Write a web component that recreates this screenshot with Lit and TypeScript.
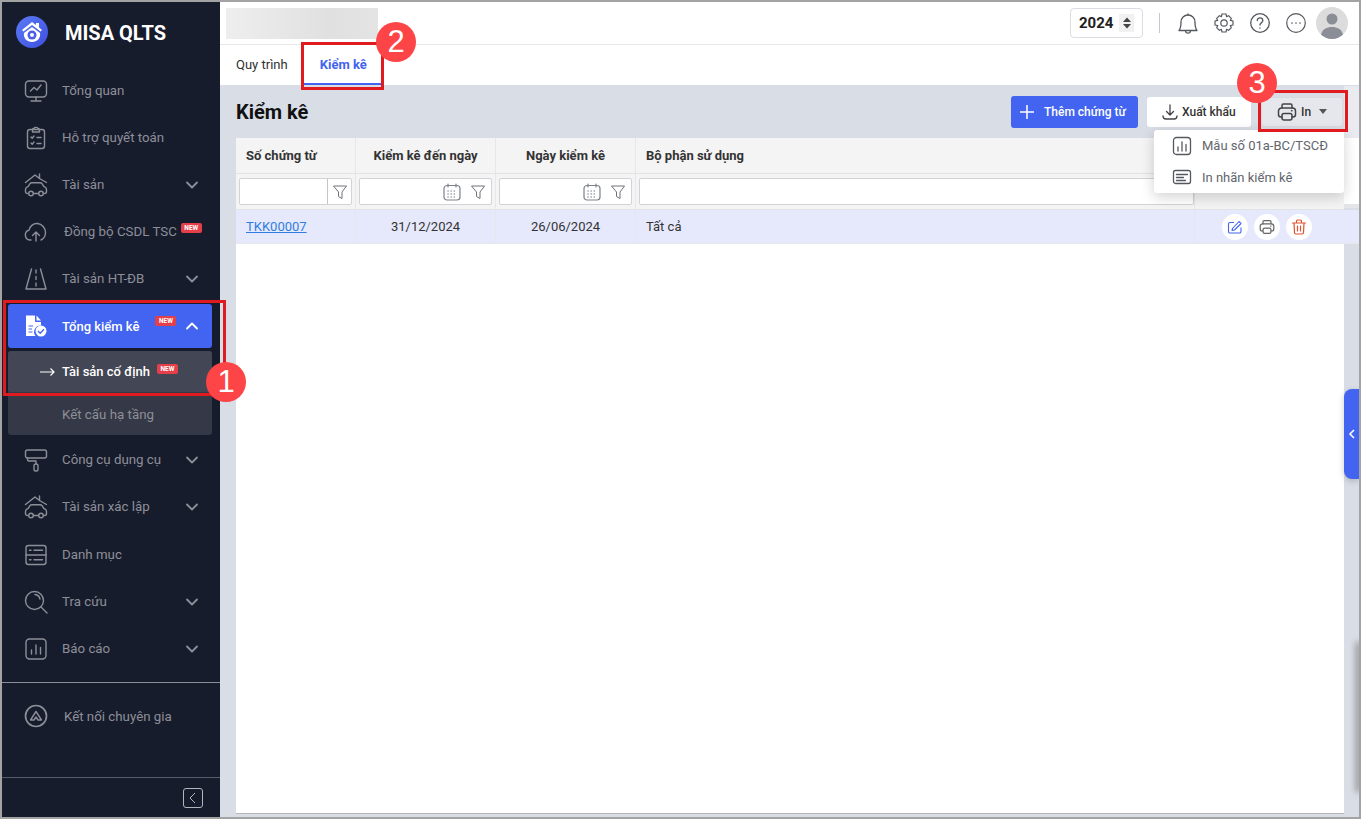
import { LitElement, html, css, svg } from "lit";
import { customElement } from "lit/decorators.js";

const ic = (size: number, body: unknown, vb = 24) => html`<svg class="ic" width=${size} height=${size} viewBox="0 0 ${vb} ${vb}" fill="none" stroke="currentColor" stroke-width="1.400" stroke-linecap="round" stroke-linejoin="round">${body}</svg>`;

const carHouse = svg`<path d="M1.500 9.500 11 2l4.500 3.500M15.500 1v4.500M22.500 9.500l-7-4"/><path d="M3.500 20.500C2 20.500 1.500 19.500 1.500 18.500v-2c0-1.500 1-2.300 2.500-2.800l2-3c.5-.7 1-1 1.800-1h8.400c.8 0 1.300.3 1.800 1l2 3c1.500.5 2.500 1.300 2.500 2.800v2c0 1-.5 2-2 2M9.500 20.500h5"/><circle cx="7" cy="20.500" r="2.300"/><circle cx="17" cy="20.500" r="2.300"/>`;
const icons: Record<string, unknown> = {
  monitor: svg`<rect x="1.500" y="2" width="21" height="16" rx="3.500"/><path d="M12 18v4M7 22h10M6.500 12l3.500-3.500 3 2.500 4-5"/>`,
  clip: svg`<rect x="3.500" y="3.500" width="17" height="19" rx="2.500"/><path d="M8.500 3.500c0-1 1-1 1.500-1 0-1.500 4-1.500 4 0 .5 0 1.500 0 1.500 1V6h-7ZM7 11l1.200 1.200L10 10M13 11.500h4M7 17l1.200 1.200L10 16M13 17.500h4"/>`,
  car: carHouse,
  cloud: svg`<path d="M7 20H6a5 5 0 0 1-1-9.800C6 6 9.500 3 13.500 3.500c4.500.5 8 4.500 8 9 0 3.500-1.500 6-4.500 7.500"/><path d="M12 21v-9M8.500 15.500 12 12l3.500 3.500"/>`,
  road: svg`<path d="M7.500 2 2 22h20L16.500 2M12 3v3M12 9.500v3M12 16v3"/>`,
  roller: svg`<rect x="1.500" y="2" width="21" height="8" rx="2"/><path d="M3.500 10v1.500c0 1 .5 1.500 1.500 1.500h7v3"/><rect x="10" y="16" width="4" height="7" rx="1.800"/>`,
  list: svg`<rect x="2" y="2.500" width="20" height="19" rx="2.500"/><path d="M2 12h20M5.500 7.200h1.500M10 7.200h8.500M5.500 16.800h1.500M10 16.800h8.500"/>`,
  search: svg`<circle cx="10.500" cy="10.500" r="9"/><path d="M17 17l6 6M11 4.500c2.500.3 4.500 2 5 4.500"/>`,
  chart: svg`<rect x="2" y="2" width="20" height="20" rx="3.500"/><path d="M7.500 13v4M12 8v9M16.500 10.500V17"/>`,
  chat: svg`<circle cx="12" cy="12" r="10.500" stroke-width="1.700"/><path d="M6.500 16 12 7.500l5.500 8.500h-3.500L12 13l-2 3Z"/>`,
};

interface Nav { icon: string; label: string; chevron?: boolean; isNew?: boolean; shift?: boolean; low?: boolean }
const top: Nav[] = [
  { icon: "monitor", label: "Tổng quan" },
  { icon: "clip", label: "Hỗ trợ quyết toán" },
  { icon: "car", label: "Tài sản", chevron: true },
  { icon: "cloud", label: "Đồng bộ CSDL TSC", isNew: true, shift: true },
  { icon: "road", label: "Tài sản HT-ĐB", chevron: true },
];
const rest: Nav[] = [
  { icon: "roller", label: "Công cụ dụng cụ", chevron: true },
  { icon: "car", label: "Tài sản xác lập", chevron: true },
  { icon: "list", label: "Danh mục", low: true },
  { icon: "search", label: "Tra cứu", chevron: true },
  { icon: "chart", label: "Báo cáo", chevron: true },
];

const chevron = (up = false) => html`<svg class="chev" width="14" height="14" viewBox="0 0 14 14" fill="none" stroke="currentColor" stroke-width="1.800" stroke-linecap="round" stroke-linejoin="round"><path d=${up ? "M2 9.500 7 4.500l5 5" : "M2 4.500l5 5 5-5"}/></svg>`;
const filter = html`<svg width="16" height="16" viewBox="0 0 16 16" fill="none" stroke="#6f7278" stroke-width="1" stroke-linejoin="round"><path d="M1.500 2h13L10 8v6.500l-3.500-2V8Z"/></svg>`;
const cal = html`<svg width="18" height="18" viewBox="0 0 18 18" fill="none" stroke="#7d818b" stroke-width="1.200" stroke-linecap="round"><rect x="1" y="2.500" width="16" height="14.500" rx="3"/><path d="M5 1v3M13 1v3"/><path stroke-dasharray="0.100 3" stroke-width="1.300" d="M5 8h9M5 11h9M5 14h9"/></svg>`;
const printer = (s: number, col: string) => html`<svg width=${s} height=${s} viewBox="0 0 20 20" fill="none" stroke=${col} stroke-width="1.500" stroke-linecap="round" stroke-linejoin="round"><path d="M5 6V3.500C5 2.500 5.800 2 6.500 2h7c.8 0 1.500.5 1.500 1.500V6"/><path d="M5 15H4a2.500 2.500 0 0 1-2.500-2.500V9A3 3 0 0 1 4.500 6h11a3 3 0 0 1 3 3v3.500A2.500 2.500 0 0 1 16 15h-1"/><rect x="5" y="11.500" width="10" height="6.500" rx="2"/><path d="M14.500 8.800h.5"/></svg>`;

@customElement("app-root")
export class AppRoot extends LitElement {
  static styles = css`
    :host { display: block; width: 1361px; height: 819px; box-sizing: border-box; border: 2px solid #a3a3a3; position: relative; overflow: hidden; font-family: Roboto, "Noto Sans", sans-serif; font-size: 13px; color: #212121; }
    .app { display: flex; height: 100%; }
    .side { width: 218px; flex: none; background: #171c2d; color: #8d8f98; display: flex; flex-direction: column; font-size: 13.300px; }
    .brand { height: 65px; flex: none; display: flex; align-items: flex-start; padding: 14px 0 0 14px; box-sizing: border-box; gap: 17px; color: #fff; font-weight: 700; font-size: 20px; }
    .brand span { line-height: 35px; }
    .item { height: 47px; flex: none; display: flex; align-items: center; padding-left: 22px; position: relative; }
    .item.low { margin-top: 1px; }
    .item .ic { flex: none; margin-right: 14px; }
    .item.shift .lab { margin-left: 2px; }
    .chev { position: absolute; right: 21px; top: 50%; margin-top: -7px; }
    .new { display: inline-flex; align-items: center; justify-content: center; width: 21px; height: 10px; background: #e53f49; color: #fff; font-size: 6.500px; font-weight: 700; border-radius: 2px; margin-left: 4px; transform: translateY(-4px); }
    .active { margin: 2px 8px 0 6px; height: 44px; box-sizing: border-box; background: #4264f0; color: #fff; border-radius: 3px; padding-left: 16px; font-weight: 500; display: flex; align-items: center; position: relative; flex: none; font-size: 13px; }
    .active .new { margin-left: 16px; transform: translateY(-5px); }
    .active .chev { right: 13px; }
    .active .lab { margin-left: 14px; }
    .sub { margin: 3px 8px 1px 6px; background: #353846; border-radius: 3px; height: 84px; flex: none; font-size: 13px; }
    .sub div { height: 41px; display: flex; align-items: center; padding-left: 32px; gap: 7px; }
    .sub .on { background: #434654; color: #fff; font-weight: 500; border-radius: 3px; }
    .sub .on .new { margin-left: 0; transform: translateY(-3px); }
    .sub .off { height: 45px; padding-left: 54px; font-size: 13.300px; }
    .spacer1 { height: 10px; flex: none; }
    .rule { height: 1px; background: #8b8e97; flex: none; }
    .rule.dim { background: #585c68; }
    .expert { height: 94px; flex: none; display: flex; align-items: center; padding: 0 0 28px 22px; box-sizing: border-box; }
    .expert .ic { margin-right: 16px; }
    .foot { flex: 1; display: flex; justify-content: flex-end; align-items: center; padding-right: 17px; }
    .collapse { width: 20px; height: 20px; box-sizing: border-box; border: 1px solid #b4b6bc; border-radius: 3px; display: flex; align-items: center; justify-content: center; }

    .main { flex: 1; min-width: 0; display: flex; flex-direction: column; background: #d9dde6; }
    .topbar { height: 42px; flex: none; background: #fff; display: flex; align-items: center; border-bottom: 1px solid #e6e7ea; padding: 0 11px 0 6px; box-sizing: content-box; }
    .blur { width: 152px; height: 31px; background: linear-gradient(90deg, #eeeeee, #e0e0e0 70%, #e4e4e4); }
    .year { margin-left: auto; width: 73px; height: 30px; box-sizing: border-box; border: 1px solid #d9dce3; border-radius: 4px; display: flex; align-items: center; padding-left: 8px; font-weight: 700; font-size: 15px; gap: 6px; }
    .spin { width: 15px; height: 18px; background: #f1f1f1; display: flex; align-items: center; justify-content: center; }
    .sep { width: 1px; height: 20px; background: #c4c8d0; margin: 0 16px; }
    .tools { display: flex; align-items: center; gap: 12px; color: #55585e; }
    .tools svg { display: block; }
    .avatar { width: 32px; height: 32px; border-radius: 50%; background: #dcdcdc; overflow: hidden; margin-left: -4px; }
    .tabs { height: 40px; flex: none; background: #fff; display: flex; padding-left: 16px; align-items: stretch; }
    .tab { display: flex; align-items: center; height: 38px; color: #303030; }
    .tab.sel { margin-left: 16px; padding: 0 16px; color: #4264f0; font-weight: 700; font-size: 13px; border-bottom: 2px solid #4264f0; }
    .content { flex: 1; display: flex; flex-direction: column; padding: 0 15px 3px 16px; min-height: 0; }
    .head { height: 53px; flex: none; display: flex; align-items: center; }
    h1 { margin: 0; font-size: 20px; font-weight: 700; color: #111; margin-right: auto; }
    .btn { height: 30px; box-sizing: border-box; display: flex; align-items: center; background: #fff; border-radius: 3px; font-weight: 500; font-size: 12px; color: #333; }
    .btn.add { width: 127px; height: 32px; background: #4264f0; color: #fff; padding-left: 8px; gap: 9px; margin-right: 9px; }
    .btn.exp { width: 104px; padding-left: 15px; gap: 4px; margin-right: 10px; }
    .btn.prt { width: 82px; margin-right: 1px; background: #e6e7ec; border: 1px solid #d8dae0; padding-left: 15px; gap: 4px; }
    .caret { width: 0; height: 0; border: 4px solid transparent; border-top: 5px solid #555; margin: 4px 0 0 4px; }
    .panel { flex: 1; background: #fff; display: flex; flex-direction: column; min-height: 0; border-bottom: 1px solid #b5b5b5; }
    .row { display: grid; grid-template-columns: 120px 140px 140px 559px 149px; flex: none; }
    .row > div { box-sizing: border-box; border-right: 1px solid #e6e7ea; display: flex; align-items: center; }
    .row > div:last-child { border-right: 0; }
    .hd { height: 35px; background: #f4f4f4; font-weight: 700; color: #333; font-size: 13px; border-bottom: 1px solid #e2e3e6; }
    .hd > div { padding-left: 10px; }
    .hd .c { justify-content: center; padding: 0; }
    .flt { height: 36px; background: #f4f4f4; border-bottom: 1px solid #e2e3e6; box-sizing: border-box; }
    .flt > div { padding: 0 3px; }
    .flt > div.wide { padding-right: 0; }
    .box { flex: 1; height: 27px; box-sizing: border-box; background: #fff; border: 1px solid #d2d3d6; border-radius: 2px; display: flex; align-items: center; justify-content: flex-end; gap: 9px; padding-right: 5px; }
    .box.split { padding-right: 0; gap: 0; }
    .box.split span { width: 24px; height: 100%; border-left: 1px solid #c4c5c8; display: flex; align-items: center; justify-content: center; box-sizing: border-box; }
    .dat { height: 34px; background: #e6e9fb; border-bottom: 1px solid #e6e7ea; box-sizing: border-box; color: #333; margin-right: -15px; grid-template-columns: 120px 140px 140px 559px 164px; }
    .dat > div { padding-left: 10px; }
    .dat .c { justify-content: center; padding: 0; }
    .dat a { color: #2f7de1; text-decoration: underline; }
    .acts { justify-content: flex-start; padding-left: 27px !important; gap: 6px; }
    .round { width: 26px; height: 26px; border-radius: 50%; background: #fff; display: flex; align-items: center; justify-content: center; flex: none; }

    .patch { position: absolute; right: 0; width: 15px; }
    .patch.a { top: 84px; height: 53px; background: #e9ebf0; }
    .patch.b { top: 136px; height: 66px; background: #fff; border-bottom: 4px solid #e4e5e8; box-sizing: content-box; }
    .menu { position: absolute; left: 1152px; top: 128px; width: 190px; height: 63px; background: #fff; border-radius: 3px; box-shadow: 0 4px 14px rgba(0,0,0,.18); color: #62656b; display: flex; flex-direction: column; justify-content: center; }
    .menu div { height: 32px; display: flex; align-items: center; padding-left: 18px; gap: 10px; }
    .handle { position: absolute; right: 0; top: 387px; width: 15px; height: 90px; background: #4264f0; border-radius: 8px 0 0 8px; display: flex; align-items: center; justify-content: center; box-shadow: 0 2px 6px rgba(0,0,0,.2); }
    .smudge { position: absolute; right: -2px; top: 640px; width: 5px; height: 150px; background: #8a8a8a; filter: blur(3px); }
    .mark { position: absolute; border: 3px solid #e01b1f; box-sizing: border-box; pointer-events: none; }
    .num { position: absolute; width: 40px; height: 40px; border-radius: 50%; background: #fd4446; color: #fff; font-size: 31px; display: flex; align-items: center; justify-content: center; font-family: "Liberation Sans", sans-serif; }
    .m1 { left: 1px; top: 298px; width: 223px; height: 96px; }
    .m2 { left: 299px; top: 40px; width: 83px; height: 48px; }
    .m3 { left: 1256px; top: 88px; width: 90px; height: 42px; }
    .n1 { left: 204px; top: 360px; }
    .n2 { left: 374px; top: 20px; }
    .n3 { left: 1235px; top: 61px; }
  `;

  private nav(n: Nav) {
    return html`<div class="item ${n.shift ? "shift" : ""} ${n.low ? "low" : ""}">${ic(24, icons[n.icon])}<span class="lab">${n.label}</span>${n.isNew ? html`<span class="new">NEW</span>` : ""}${n.chevron ? chevron() : ""}</div>`;
  }

  render() {
    return html`
      <div class="app">
        <aside class="side">
          <div class="brand">
            <svg width="32" height="32" viewBox="0 0 32 32"><defs><linearGradient id="lg" x1="0" y1="0" x2="1" y2="1"><stop offset="0" stop-color="#5a7bf5"/><stop offset="1" stop-color="#3f4fe0"/></linearGradient></defs><circle cx="16" cy="16" r="16" fill="url(#lg)"/><path d="M6 14 16 6l4 3V7h3v4.500l3 2.500-1.500 1.500L16 9 7.500 15.500Z" fill="#fff"/><path d="M8 17l8-6 8 6c1 5-3 9-8 9s-9-4-8-9Z" fill="#fff"/><circle cx="16" cy="19" r="4.500" fill="#4a5de6"/><circle cx="16" cy="19" r="2" fill="#fff"/></svg>
            <span>MISA QLTS</span>
          </div>
          ${top.map((n) => this.nav(n))}
          <div class="active">
            <svg width="24" height="24" viewBox="0 0 22 24" fill="#fff"><path d="M1 1.500h9V7c0 .6.400 1 1 1h5v3.500A6.500 6.500 0 0 0 10.500 22H1Z"/><path d="M11.500 1.500 16 6.500h-4.500Z"/><circle cx="16" cy="17" r="5.500" fill="#fff"/><path d="M13 17l2.200 2.200L19 15.200" stroke="#4264f0" stroke-width="1.300" fill="none"/><path d="M3.500 12h4.500M3.500 15h3.500M3.500 18h4" stroke="#4264f0" stroke-width="1.200"/></svg>
            <span class="lab">Tổng kiểm kê</span><span class="new">NEW</span>${chevron(true)}
          </div>
          <div class="sub">
            <div class="on"><svg width="15" height="10" viewBox="0 0 15 10" fill="none" stroke="#fff" stroke-width="1.200"><path d="M0 5h14M10.500 1.500 14 5l-3.500 3.500"/></svg><span>Tài sản cố định</span><span class="new">NEW</span></div>
            <div class="off">Kết cấu hạ tầng</div>
          </div>
          ${rest.map((n) => this.nav(n))}
          <div class="spacer1"></div>
          <div class="rule"></div>
          <div class="expert">${ic(24, icons.chat)}<span>Kết nối chuyên gia</span></div>
          <div class="rule dim"></div>
          <div class="foot"><div class="collapse"><svg width="10" height="12" viewBox="0 0 10 12" fill="none" stroke="#b4b6bc" stroke-width="1"><path d="M7 1 2 6l5 5"/></svg></div></div>
        </aside>
        <main class="main">
          <div class="topbar">
            <div class="blur"></div>
            <div class="year">2024<span class="spin"><svg width="10" height="14" viewBox="0 0 10 14" fill="#444"><path d="M5 1.500 9 6H1ZM5 12.500 1 8h8Z"/></svg></span></div>
            <div class="sep"></div>
            <div class="tools">
              <svg width="24" height="24" viewBox="0 0 24 24" fill="none" stroke="currentColor" stroke-width="1.300" stroke-linejoin="round"><path d="M3 19.500c1.500-2 2-4 2-8.500a7 7 0 0 1 14 0c0 4.500.5 6.500 2 8.500Z"/><path d="M9.500 20c.3 2.800 4.700 2.800 5 0M12 4V2.500"/></svg>
              <svg width="24" height="24" viewBox="0 0 24 24" fill="none" stroke="currentColor" stroke-width="1.200" stroke-linejoin="round"><path d="M10 3h4l.6 2.600 2-.9 2.700 2.700-1 2 2.700.6v4l-2.700.6 1 2-2.700 2.700-2-1L14 21h-4l-.6-2.700-2 1-2.700-2.700 1-2L3 14v-4l2.700-.6-1-2 2.700-2.700 2 .9Z"/><circle cx="12" cy="12" r="3.200"/></svg>
              <svg width="24" height="24" viewBox="0 0 24 24" fill="none" stroke="currentColor" stroke-width="1.300" stroke-linecap="round"><circle cx="12" cy="12" r="9.300"/><path d="M9.300 9.500c0-3.400 5.500-3.400 5.500 0 0 2.200-2.800 2.300-2.800 4.500M12 17v.2"/></svg>
              <svg width="24" height="24" viewBox="0 0 24 24" fill="none" stroke="currentColor" stroke-width="1.200" stroke-linecap="round"><circle cx="12" cy="12" r="9.300"/><path d="M8 12v.1M12 12v.1M16 12v.1" stroke-width="1.600"/></svg>
              <div class="avatar"><svg width="32" height="32" viewBox="0 0 32 32" fill="#8b8e96"><circle cx="16" cy="12" r="5.500"/><path d="M5 28c1-6 6-8 11-8s10 2 11 8v4H5Z"/></svg></div>
            </div>
          </div>
          <div class="tabs"><div class="tab">Quy trình</div><div class="tab sel">Kiểm kê</div></div>
          <div class="content">
            <div class="head">
              <h1>Kiểm kê</h1>
              <div class="btn add"><svg width="16" height="16" viewBox="0 0 16 16" stroke="#fff" stroke-width="1.500"><path d="M8 1v14M1 8h14"/></svg>Thêm chứng từ</div>
              <div class="btn exp"><svg width="16" height="16" viewBox="0 0 16 16" fill="none" stroke="#444" stroke-width="1.300" stroke-linecap="round" stroke-linejoin="round"><path d="M8 1v9.500M4.500 7.500 8 11l3.500-3.500M1 12c0 2 1.500 3 3 3h8c1.500 0 3-1 3-3"/></svg>Xuất khẩu</div>
              <div class="btn prt">${printer(20, "#444")}<span>In</span><i class="caret"></i></div>
            </div>
            <div class="panel">
              <div class="row hd"><div>Số chứng từ</div><div class="c">Kiểm kê đến ngày</div><div class="c">Ngày kiểm kê</div><div>Bộ phận sử dụng</div><div></div></div>
              <div class="row flt">
                <div><div class="box split"><span>${filter}</span></div></div>
                <div><div class="box">${cal}${filter}</div></div>
                <div><div class="box">${cal}${filter}</div></div>
                <div class="wide"><div class="box"></div></div>
                <div></div>
              </div>
              <div class="row dat">
                <div><a>TKK00007</a></div><div class="c">31/12/2024</div><div class="c">26/06/2024</div><div>Tất cả</div>
                <div class="acts">
                  <span class="round"><svg width="16" height="16" viewBox="0 0 16 16" fill="none" stroke="#4264f0" stroke-width="1.100" stroke-linejoin="round"><path d="M5.500 9.500 12 2.500l2 2-6.500 6.500-2.500.5ZM7 3.500H3A1.500 1.500 0 0 0 1.500 5v7.500A1.500 1.500 0 0 0 3 14h9.500a1.500 1.500 0 0 0 1.500-1.500V8.500"/></svg></span>
                  <span class="round">${printer(16, "#666")}</span>
                  <span class="round"><svg width="16" height="16" viewBox="0 0 16 16" fill="none" stroke="#e0512f" stroke-width="1.200" stroke-linecap="round" stroke-linejoin="round"><path d="M1.500 4h13M5.500 4V2c0-.6.4-1 1-1h3c.6 0 1 .4 1 1v2M3 4l.5 9.500c0 .9.6 1.500 1.500 1.500h6c.9 0 1.500-.6 1.500-1.500L13 4M6.500 7v5M9.500 7v5"/></svg></span>
                </div>
              </div>
            </div>
          </div>
        </main>
      </div>
      <div class="patch a"></div>
      <div class="patch b"></div>
      <div class="menu">
        <div><svg width="20" height="20" viewBox="0 0 20 20" fill="none" stroke="#55585e" stroke-width="1.300" stroke-linecap="round"><rect x="1.500" y="1.500" width="17" height="17" rx="3"/><path d="M6 11v4M10 6v9M14 8.500V15"/></svg><span>Mẫu số 01a-BC/TSCĐ</span></div>
        <div><svg width="20" height="20" viewBox="0 0 20 20" fill="none" stroke="#55585e" stroke-width="1.300" stroke-linecap="round"><rect x="1.500" y="3.500" width="17" height="13" rx="2"/><path d="M4.500 7.500h11M4.500 10.500h7M4.500 13.500h9"/></svg><span>In nhãn kiểm kê</span></div>
      </div>
      <div class="smudge"></div>
      <div class="handle"><svg width="8" height="10" viewBox="0 0 8 10" fill="none" stroke="#fff" stroke-width="1.600"><path d="M6 1 2 5l4 4"/></svg></div>
      <div class="mark m1"></div>
      <div class="mark m2"></div>
      <div class="mark m3"></div>
      <div class="num n1">1</div>
      <div class="num n2">2</div>
      <div class="num n3">3</div>
    `;
  }
}
